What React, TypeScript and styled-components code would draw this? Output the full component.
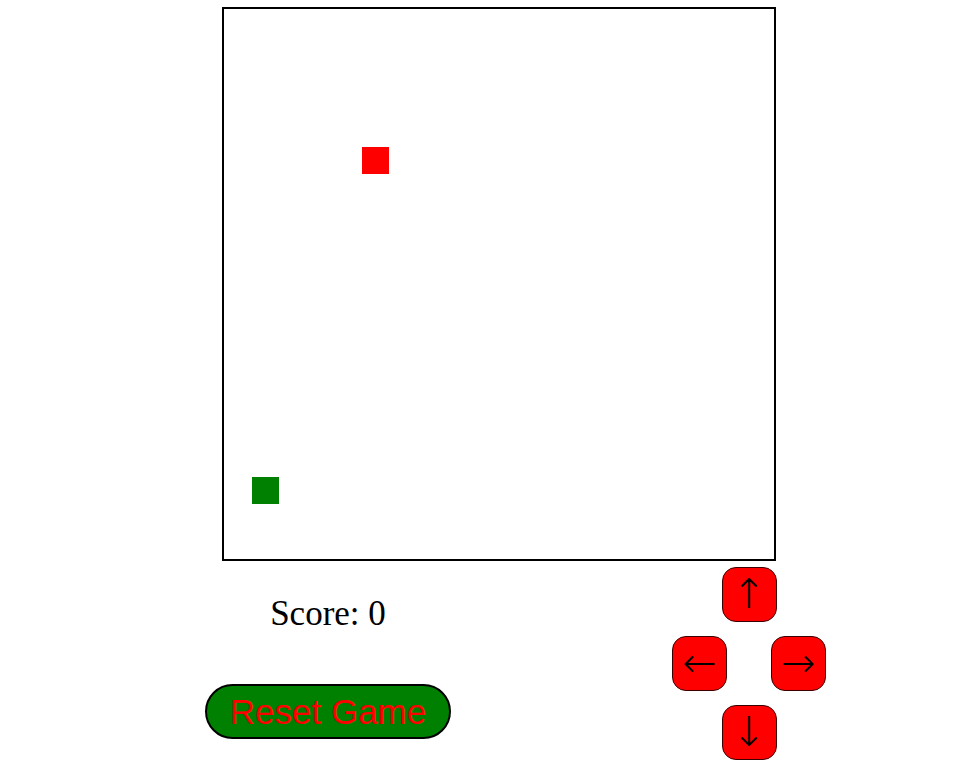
import React from "react";
import styled, { createGlobalStyle } from "styled-components";

const GlobalStyle = createGlobalStyle`
  html, body { margin: 0; padding: 0; background: #ffffff; }
  body { font-family: "Liberation Serif", "Times New Roman", serif; }
`;

const CELL = 27.5;

const Page = styled.div`
  display: flex;
  flex-direction: column;
  align-items: flex-start;
  padding: 7px 0 0 205px;
  width: 980px;
  height: 776px;
  box-sizing: border-box;
`;

const Board = styled.div`
  position: relative;
  margin-left: 17px;
  width: 550px;
  height: 550px;
  border: 2px solid #000000;
  background: #ffffff;
`;

const Cell = styled.div<{ $color: string }>`
  position: absolute;
  width: ${CELL}px;
  height: ${CELL}px;
  background: ${(p) => p.$color};
`;

const Controls = styled.div`
  display: flex;
  flex-direction: row;
  align-items: flex-start;
  gap: 221px;
`;

const LeftColumn = styled.div`
  display: flex;
  flex-direction: column;
  align-items: center;
  width: 246px;
  padding-top: 33px;
`;

const Score = styled.div`
  font-family: "Liberation Serif", "Times New Roman", serif;
  font-size: 35px;
  line-height: 40px;
  color: #000000;
`;

const ResetButton = styled.button`
  margin-top: 50px;
  width: 246px;
  height: 55px;
  box-sizing: border-box;
  border: 2px solid #000000;
  border-radius: 28px;
  background: #008000;
  color: #ff0000;
  font-family: "Liberation Sans", Arial, sans-serif;
  font-size: 35px;
  line-height: 40px;
  padding: 0;
  display: flex;
  align-items: center;
  justify-content: center;
  cursor: pointer;
`;

const DPad = styled.div`
  display: flex;
  flex-direction: column;
  align-items: center;
  gap: 14px;
  padding-top: 6px;
  width: 154px;
`;

const DRow = styled.div`
  display: flex;
  flex-direction: row;
  gap: 44px;
`;

const ArrowButton = styled.button`
  width: 55px;
  height: 55px;
  box-sizing: border-box;
  border: 1px solid #3a0000;
  border-radius: 14px;
  background: #ff0000;
  color: #000000;
  font-family: "DejaVu Sans", sans-serif;
  font-size: 41px;
  font-weight: 200;
  line-height: 1;
  padding: 0;
  display: flex;
  align-items: center;
  justify-content: center;
  cursor: pointer;
`;

const snake = [{ x: 1, y: 17 }];
const food = { x: 5, y: 5 };

export default function App() {
  return (
    <>
      <GlobalStyle />
      <Page>
        <Board>
          <Cell
            $color="#ff0000"
            style={{ left: food.x * CELL, top: food.y * CELL }}
          />
          {snake.map((s, i) => (
            <Cell
              key={i}
              $color="#008000"
              style={{ left: s.x * CELL, top: s.y * CELL }}
            />
          ))}
        </Board>
        <Controls>
          <LeftColumn>
            <Score>Score: 0</Score>
            <ResetButton>Reset Game</ResetButton>
          </LeftColumn>
          <DPad>
            <ArrowButton>↑</ArrowButton>
            <DRow>
              <ArrowButton>←</ArrowButton>
              <ArrowButton>→</ArrowButton>
            </DRow>
            <ArrowButton>↓</ArrowButton>
          </DPad>
        </Controls>
      </Page>
    </>
  );
}
